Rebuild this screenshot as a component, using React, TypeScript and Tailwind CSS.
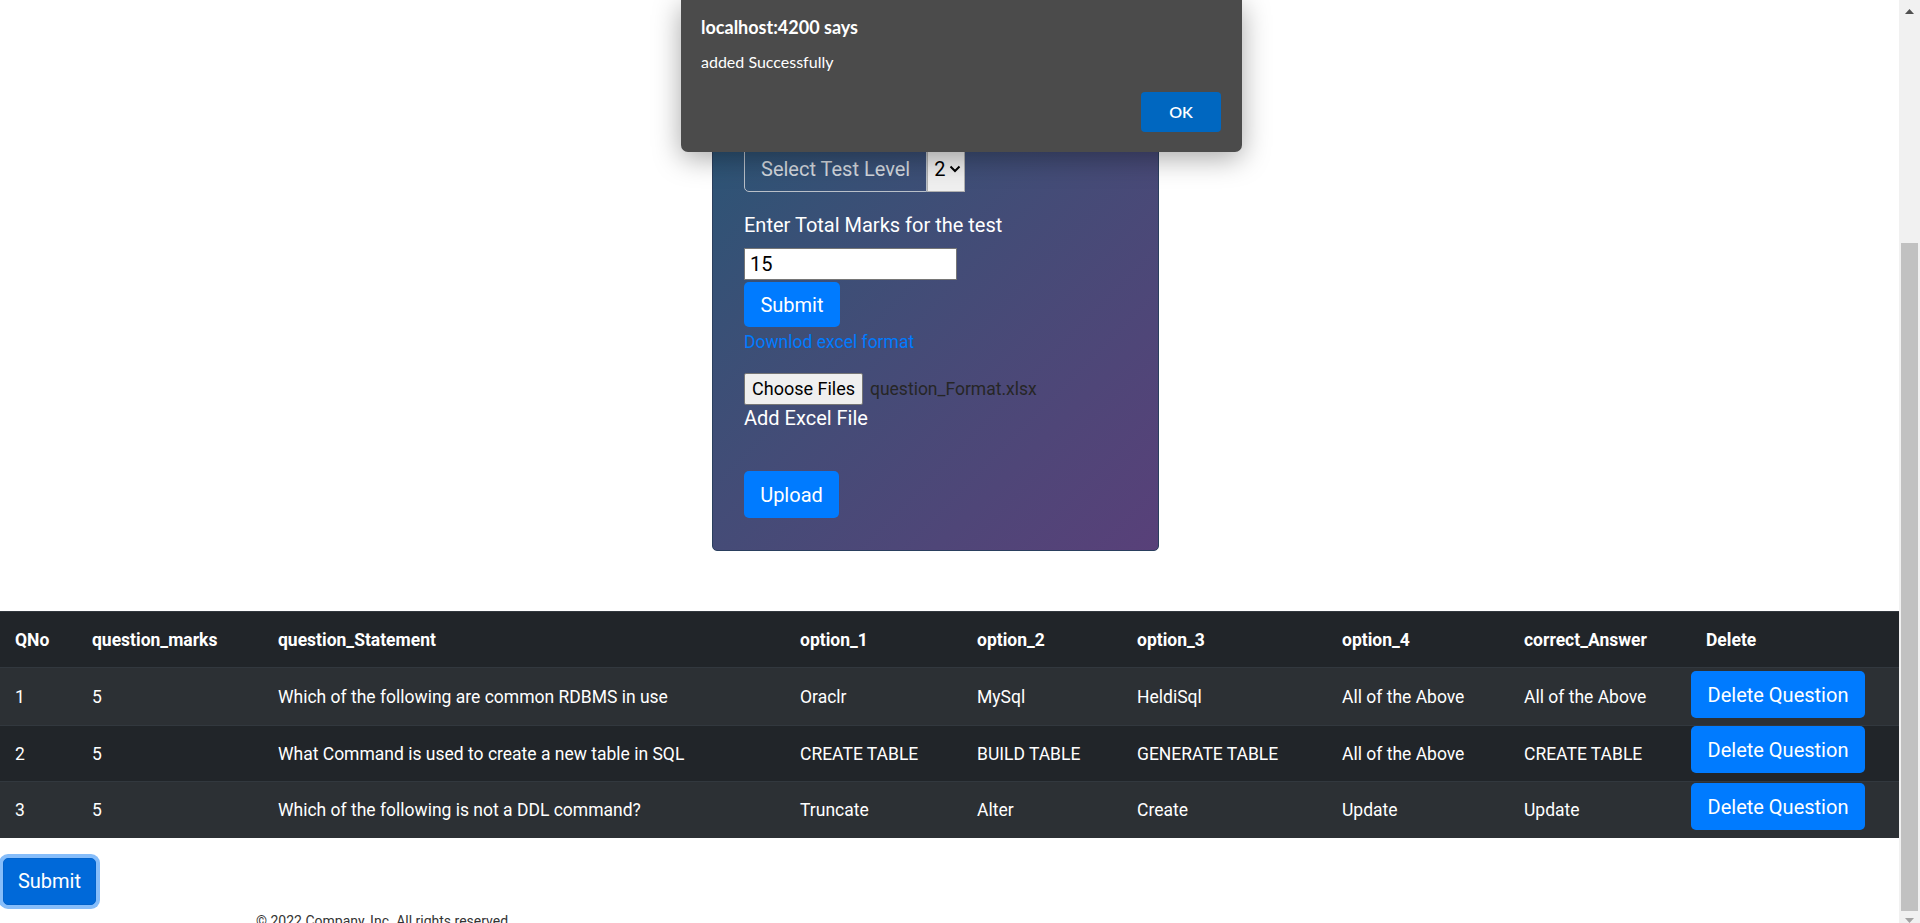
import React from 'react'

type Question = {
  no: number
  marks: number
  statement: string
  options: [string, string, string, string]
  answer: string
}

const questions: Question[] = [
  {
    no: 1,
    marks: 5,
    statement: 'Which of the following are common RDBMS in use',
    options: ['Oraclr', 'MySql', 'HeldiSql', 'All of the Above'],
    answer: 'All of the Above',
  },
  {
    no: 2,
    marks: 5,
    statement: 'What Command is used to create a new table in SQL',
    options: ['CREATE TABLE', 'BUILD TABLE', 'GENERATE TABLE', 'All of the Above'],
    answer: 'CREATE TABLE',
  },
  {
    no: 3,
    marks: 5,
    statement: 'Which of the following is not a DDL command?',
    options: ['Truncate', 'Alter', 'Create', 'Update'],
    answer: 'Update',
  },
]

// row heights and button offsets as they sit in the screenshot
const rowStyle = [
  { h: 'h-[58px]', bg: 'bg-[#2c3034]', btn: 'mt-[3px]' },
  { h: 'h-[56px]', bg: 'bg-[#212529]', btn: 'mt-0' },
  { h: 'h-[56px]', bg: 'bg-[#2c3034]', btn: 'mt-[1px]' },
]

const headers = [
  { label: 'QNo', w: 'w-[77px]' },
  { label: 'question_marks', w: 'w-[186px]' },
  { label: 'question_Statement', w: 'w-[522px]' },
  { label: 'option_1', w: 'w-[177px]' },
  { label: 'option_2', w: 'w-[160px]' },
  { label: 'option_3', w: 'w-[205px]' },
  { label: 'option_4', w: 'w-[182px]' },
  { label: 'correct_Answer', w: 'w-[182px]' },
  { label: 'Delete', w: 'w-[208px]' },
]

function AlertDialog() {
  return (
    <div className="absolute left-[681px] top-0 z-10 flex h-[152px] w-[561px] flex-col rounded-b-[7px] bg-[#4b4b4b] font-[Lato,sans-serif] text-white shadow-[0_6px_28px_rgba(0,0,0,0.35)]">
      <p className="pl-[20px] pt-[16px] text-[18px] font-bold leading-[22px]">localhost:4200 says</p>
      <p className="mt-[14px] pl-[20px] text-[16px] leading-[20px]">added Successfully</p>
      <div className="mt-[20px] flex justify-end pr-[21px]">
        <button
          type="button"
          className="h-[40px] w-[80px] rounded-[4px] bg-[#0067c0] text-[16px] font-semibold text-white"
        >
          OK
        </button>
      </div>
    </div>
  )
}

function Scrollbar() {
  return (
    <div className="flex w-[21px] shrink-0 flex-col items-center bg-[#f1f1f1]">
      <svg className="mt-[9px]" width="9" height="5" viewBox="0 0 9 5">
        <polygon points="4.5,0 9,5 0,5" fill="#505050" />
      </svg>
      <div className="mt-[229px] h-[668px] w-[17px] bg-[#c1c1c1]" />
      <svg className="mt-[7px]" width="9" height="5" viewBox="0 0 9 5">
        <polygon points="0,0 9,0 4.5,5" fill="#a3a3a3" />
      </svg>
    </div>
  )
}

function TestCard() {
  return (
    <div className="ml-[712px] w-[447px] rounded-[5px] border border-[#2a3f5e] bg-linear-to-br from-[#285575] to-[#584079] pb-[32px] pl-[31px] pt-[48px] text-[20px] leading-[30px] text-white">
      <div className="flex h-[47px]">
        <span className="flex items-center rounded-l-[5px] border border-[#b9c0c9] px-[16px] text-[#d3d8de]">
          Select Test Level
        </span>
        <span className="flex w-[38px] items-center gap-[4px] border border-[#b0b0b0] bg-[#efefef] pl-[6px] text-black">
          2
          <svg width="12" height="8" viewBox="0 0 12 8">
            <path d="M1.5 1.5 L6 6 L10.5 1.5" fill="none" stroke="#000" strokeWidth="2" />
          </svg>
        </span>
      </div>

      <label className="mt-[18px] block">Enter Total Marks for the test</label>
      <input
        readOnly
        defaultValue="15"
        className="mt-[8px] block h-[32px] w-[213px] border border-[#767676] bg-white px-[5px] text-[20px] text-black outline-none"
      />
      <button type="button" className="mt-[2px] block h-[45px] w-[96px] rounded-[5px] bg-[#007bff] text-white">
        Submit
      </button>
      <a href="#" className="block text-[17.5px] text-[#007bff]">
        Downlod excel format
      </a>

      <div className="mt-[16px] flex h-[32px] items-center">
        <span className="flex h-[32px] w-[119px] items-center justify-center rounded-[2px] border border-[#767676] bg-[#efefef] text-[18px] text-black">
          Choose Files
        </span>
        <span className="ml-[7px] text-[17.5px] text-[#262626]">question_Format.xlsx</span>
      </div>
      <p className="-mt-[2px]">Add Excel File</p>

      <button type="button" className="mt-[38px] block h-[47px] w-[95px] rounded-[5px] bg-[#007bff] text-white">
        Upload
      </button>
    </div>
  )
}

function QuestionTable() {
  return (
    <table className="mt-[60px] w-full table-fixed border-collapse text-left text-[17.5px] leading-[26px] text-white">
      <thead>
        <tr className="h-[56px] border-t border-[#32383e] bg-[#212529]">
          {headers.map((h) => (
            <th key={h.label} className={`${h.w} px-[15px] align-middle font-bold`}>
              {h.label}
            </th>
          ))}
        </tr>
      </thead>
      <tbody>
        {questions.map((q, i) => (
          <tr key={q.no} className={`${rowStyle[i].h} ${rowStyle[i].bg} border-t border-[#32383e]`}>
            <td className="px-[15px] align-middle">{q.no}</td>
            <td className="px-[15px] align-middle">{q.marks}</td>
            <td className="px-[15px] align-middle">{q.statement}</td>
            {q.options.map((o) => (
              <td key={o} className="px-[15px] align-middle">
                {o}
              </td>
            ))}
            <td className="px-[15px] align-middle">{q.answer}</td>
            <td className="p-0 align-top">
              <button
                type="button"
                className={`${rowStyle[i].btn} block h-[47px] w-[174px] rounded-[5px] bg-[#007bff] text-[20px] leading-[30px] text-white`}
              >
                Delete Question
              </button>
            </td>
          </tr>
        ))}
      </tbody>
    </table>
  )
}

export default function App() {
  return (
    <div className="flex h-[923px] overflow-hidden bg-white font-[Roboto,sans-serif]">
      <div className="relative min-w-0 flex-1">
        <AlertDialog />
        <div className="pt-[96px]">
          <TestCard />
        </div>
        <QuestionTable />
        <div className="mt-[20px] pl-[3px]">
          <button
            type="button"
            className="h-[47px] w-[93px] rounded-[5px] border border-[#0062cc] bg-[#0069d9] text-[20px] text-white ring-4 ring-[#86bdfa]"
          >
            Submit
          </button>
        </div>
        <footer className="mt-[6px] pl-[256px] text-[14px] leading-[21px] text-[#333]">
          © 2022 Company, Inc. All rights reserved.
        </footer>
      </div>
      <Scrollbar />
    </div>
  )
}
